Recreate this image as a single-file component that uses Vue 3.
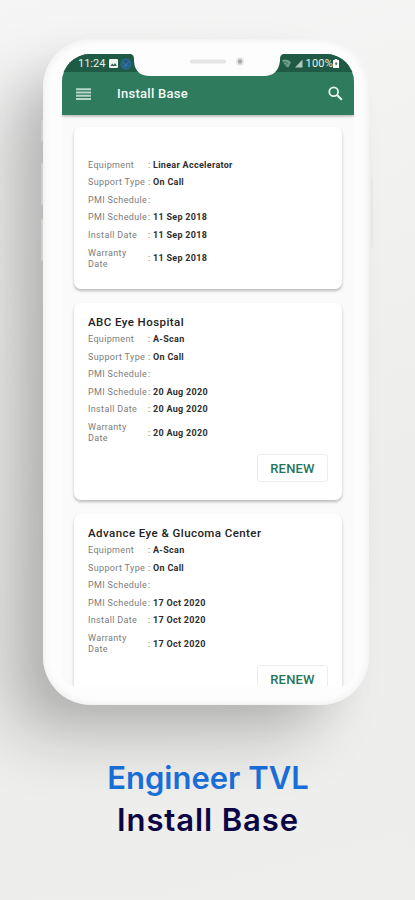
<script setup>
const cards = [
  { title: '', equipment: 'Linear Accelerator', date: '11 Sep 2018', renew: false },
  { title: 'ABC Eye Hospital', equipment: 'A-Scan', date: '20 Aug 2020', renew: true },
  { title: 'Advance Eye & Glucoma Center', equipment: 'A-Scan', date: '17 Oct 2020', renew: true },
]

const rowsOf = (card) => [
  ['Equipment', card.equipment],
  ['Support Type', 'On Call'],
  ['PMI Schedule', ''],
  ['PMI Schedule', card.date],
  ['Install Date', card.date],
  ['Warranty Date', card.date],
]
</script>

<template>
  <main class="page">
    <div class="phone">
      <i class="key key-b"></i><i class="key key-c"></i><i class="key key-a"></i><i class="key key-d"></i>
      <div class="screen">
        <header>
          <div class="status">
            <div class="status-left">
              <span>11:24</span>
              <svg width="9" height="9" viewBox="0 0 9 9"><rect width="9" height="9" rx="1.2" fill="#eef5f1" /><path d="M1.3 7 3.3 4.6 4.6 6 6 4 7.8 7z" fill="#315f4e" /></svg>
              <svg width="12" height="12" viewBox="0 0 12 12"><circle cx="6" cy="6" r="4.8" fill="#225d78" stroke="#2768a0" stroke-width="1.4" /><path d="M3 4 5.5 7.5 9 3.5M3.5 8.5 8.5 7.5" fill="none" stroke="#3975b5" stroke-width="1.1" /></svg>
            </div>
            <div class="status-right">
              <svg width="9" height="9" viewBox="0 0 9 9"><path d="M0 1.2Q4.5-.6 9 3L6.6 8.2Q4.5 8.8 3 6.6z" fill="#6f9f8c" /><path d="M.4 3.6Q3.6 2 6.2 4.6M2.2 6Q3.6 5.2 5 6.6" fill="none" stroke="#2a664f" stroke-width=".8" /></svg>
              <svg class="signal" width="8" height="9" viewBox="0 0 8 9"><path d="M7.5.5V8.5H0z" fill="#a9c8ba" /></svg>
              <span>100%</span>
              <svg class="battery" width="6" height="9" viewBox="0 0 6 9"><path d="M1.8 0h2.4v1H6v8H0V1h1.8z" fill="#fff" /><path d="M3.6 2.5 1.7 5.2h1.1v1.9l1.7-2.8H3.4z" fill="#215b45" /></svg>
            </div>
          </div>
          <div class="toolbar">
            <svg width="15" height="12" viewBox="0 0 15 12" stroke="#b9d6ca" stroke-width="2"><path d="M0 1.3h15M0 4.5h15M0 7.7h15M0 10.9h15" /></svg>
            <h1>Install Base</h1>
            <svg width="15" height="15" viewBox="0 0 15 15" fill="none" stroke="#e8f5ef"><circle cx="5.7" cy="5.7" r="4.4" stroke-width="1.8" /><path d="M9 9l4.8 4.8" stroke-width="2.1" /></svg>
          </div>
        </header>
        <section class="list">
          <article v-for="card in cards" :key="card.equipment + card.date" class="card" :class="{ untitled: !card.title }">
            <h2 v-if="card.title">{{ card.title }}</h2>
            <dl>
              <div v-for="(row, i) in rowsOf(card)" :key="i" class="row">
                <dt>{{ row[0] }}</dt>
                <span class="colon">:</span>
                <dd>{{ row[1] }}</dd>
              </div>
            </dl>
            <button v-if="card.renew">RENEW</button>
          </article>
        </section>
      </div>
      <svg class="notch" width="152" height="23" viewBox="0 0 152 23"><path d="M0 0Q3 1 3 5V7Q4 22 19 22H133Q147 22 149 7V5Q149 1 152 0z" fill="#fdfdfd" /><rect x="59" y="5.5" width="36" height="4" rx="2" fill="#e5e5e5" /><circle cx="109" cy="7.5" r="4" fill="#e4e4e4" /><circle cx="109" cy="7.5" r="2.2" fill="#a9a9a9" /></svg>
    </div>
    <div class="caption">
      <p class="blue">Engineer TVL</p>
      <p class="navy">Install Base</p>
    </div>
  </main>
</template>

<style>
body { margin: 0; }
</style>

<style scoped>
* { box-sizing: border-box; }
h1, h2, p, dl, dd { margin: 0; }
svg { display: block; flex: none; }
.page {
  width: 415px;
  height: 900px;
  overflow: hidden;
  padding: 39px 0 0 43px;
  background: linear-gradient(165deg, #f5f5f5 0%, #f1f1f0 30%, #ededeb 60%, #eeeeed 100%);
  font-family: Roboto, sans-serif;
}
.phone {
  position: relative;
  width: 326px;
  height: 666px;
  padding: 15px 15px 19px 19px;
  border-radius: 48px;
  background: #fdfdfd;
  box-shadow: inset 0 0 9px #e9e9e9, -46px 38px 66px -6px rgba(0, 0, 0, .2), -20px 20px 42px -8px rgba(0, 0, 0, .08);
}
.key { position: absolute; width: 2px; background: #d0d0d0; border-radius: 2px; }
.key-a { left: -2px; top: 81px; height: 21px; }
.key-b { left: -2px; top: 124px; height: 42px; }
.key-c { left: -2px; top: 180px; height: 42px; }
.key-d { right: -4px; top: 138px; height: 71px; background: #e8e8e8; }
.screen {
  width: 292px;
  height: 632px;
  overflow: hidden;
  border-radius: 28px 28px 14px 14px;
  background: #fafafa;
}
header { position: relative; background: #2e7b5e; box-shadow: 0 1px 3px rgba(0, 0, 0, .35); }
.status {
  display: flex;
  justify-content: space-between;
  height: 18px;
  padding: 1px 15px 0 16px;
  background: #1f5a44;
  color: #e8f2ed;
  font-size: 11px;
  line-height: 18px;
}
.status-left, .status-right { display: flex; align-items: center; }
.status-left { gap: 4px; }
.status-left svg:last-child { margin-left: -2px; }
.status-right { gap: 3px; }
.status-right span { letter-spacing: .2px; }
.signal { margin-left: 1px; }
.battery { margin-left: -3px; }
.toolbar { display: flex; align-items: center; height: 43px; padding: 0 11px 0 14px; }
h1 { flex: 1; margin-left: 26px; color: #f3faf7; font-size: 13px; font-weight: 500; letter-spacing: .28px; }
.list { display: flex; flex-direction: column; gap: 14px; padding: 12px 12px 0; }
.card {
  display: flex;
  flex-direction: column;
  flex: none;
  height: 197px;
  padding: 11.5px 14px 0;
  border-radius: 7px;
  background: #fff;
  box-shadow: 0 2px 3px rgba(0, 0, 0, .25);
}
.untitled { height: 162px; padding-top: 29.5px; }
h2 { height: 16.5px; color: #222; font-size: 11.5px; font-weight: 500; line-height: 15px; letter-spacing: .43px; white-space: nowrap; }
.row { display: flex; align-items: center; height: 17.5px; font-size: 9px; line-height: 11px; }
.row:last-child { height: 29.5px; }
dt { width: 60px; color: #7c7c7c; letter-spacing: .35px; white-space: nowrap; }
.row:last-child dt { white-space: normal; padding-right: 15px; }
.colon { width: 5px; color: #555; }
dd { color: #2e2e2e; font-weight: 700; letter-spacing: .3px; white-space: nowrap; }
button {
  align-self: flex-end;
  width: 71px;
  height: 28px;
  margin-top: 6px;
  padding: 1px 0 0;
  border: 1px solid #ececec;
  border-radius: 3px;
  background: #fff;
  color: #26755a;
  font: 500 13px Roboto, sans-serif;
  letter-spacing: .2px;
}
.notch { position: absolute; left: 88px; top: 15px; }
.caption { display: flex; flex-direction: column; align-items: center; width: 330px; padding-top: 52px; font: 600 31px/42px Inter, sans-serif; }
.blue { color: #1a70d9; }
.navy { color: #0c0545; letter-spacing: .9px; }
</style>
